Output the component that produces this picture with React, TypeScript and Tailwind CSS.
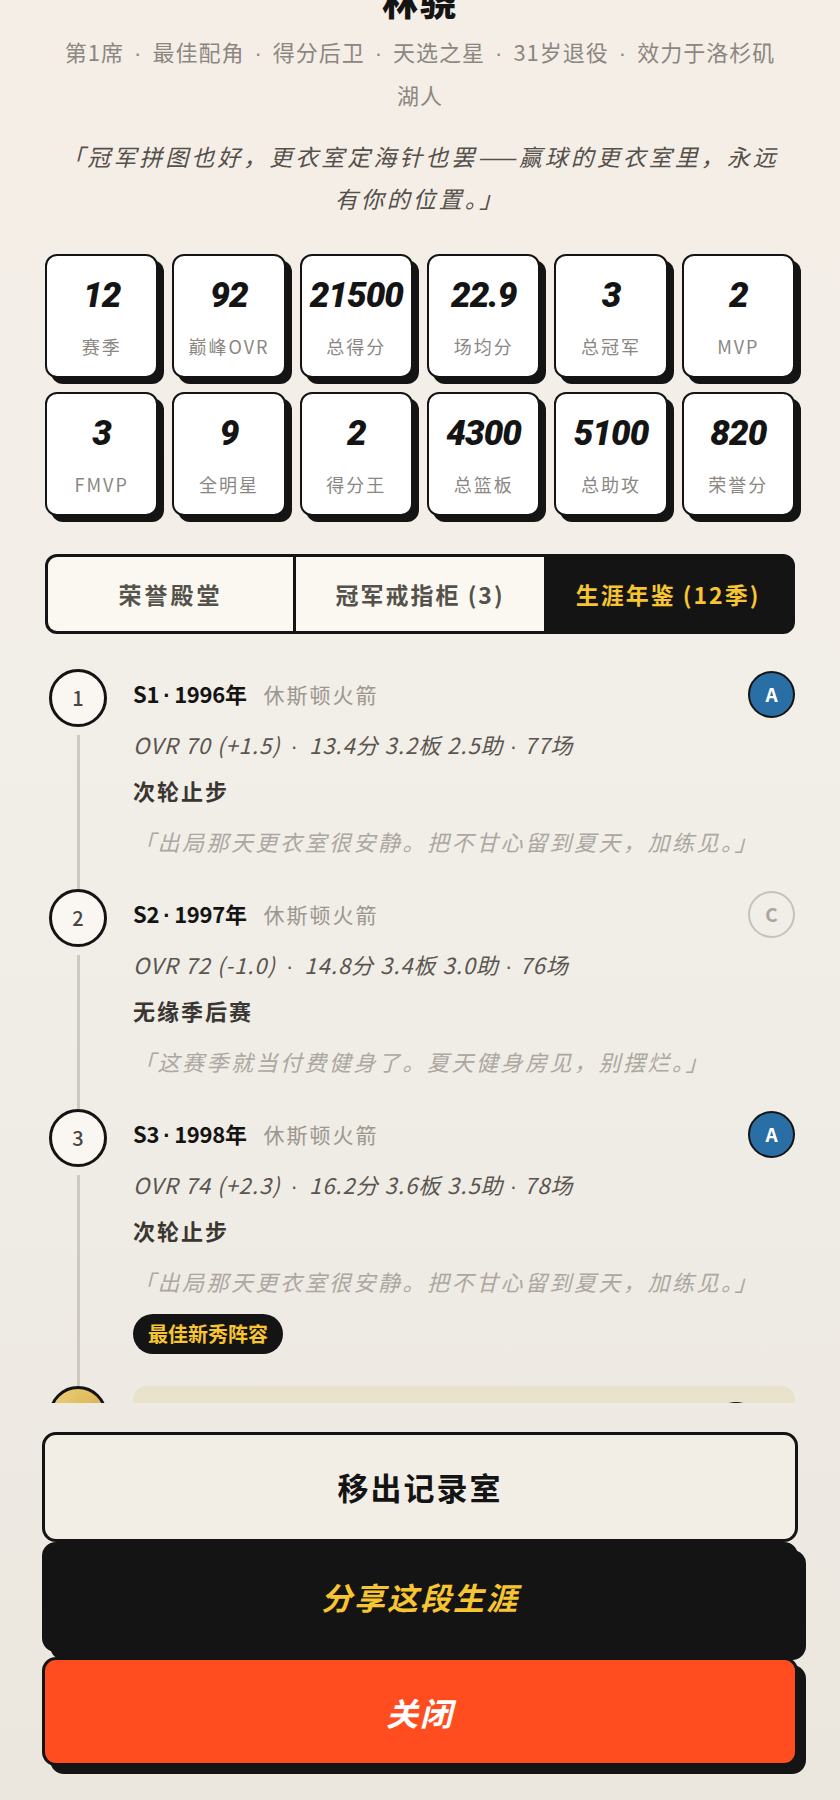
import React from 'react';

const stats: [string, string][] = [
  ['12', '赛季'],
  ['92', '巅峰OVR'],
  ['21500', '总得分'],
  ['22.9', '场均分'],
  ['3', '总冠军'],
  ['2', 'MVP'],
  ['3', 'FMVP'],
  ['9', '全明星'],
  ['2', '得分王'],
  ['4300', '总篮板'],
  ['5100', '总助攻'],
  ['820', '荣誉分'],
];

interface Season {
  no: number;
  year: string;
  team: string;
  grade: 'A' | 'C';
  ovr: string;
  line: string;
  games: string;
  result: string;
  quote: string;
  honor?: string;
}

const seasons: Season[] = [
  {
    no: 1,
    year: '1996年',
    team: '休斯顿火箭',
    grade: 'A',
    ovr: 'OVR 70 (+1.5)',
    line: '13.4分 3.2板 2.5助',
    games: '77场',
    result: '次轮止步',
    quote: '「出局那天更衣室很安静。把不甘心留到夏天，加练见。」',
  },
  {
    no: 2,
    year: '1997年',
    team: '休斯顿火箭',
    grade: 'C',
    ovr: 'OVR 72 (-1.0)',
    line: '14.8分 3.4板 3.0助',
    games: '76场',
    result: '无缘季后赛',
    quote: '「这赛季就当付费健身了。夏天健身房见，别摆烂。」',
  },
  {
    no: 3,
    year: '1998年',
    team: '休斯顿火箭',
    grade: 'A',
    ovr: 'OVR 74 (+2.3)',
    line: '16.2分 3.6板 3.5助',
    games: '78场',
    result: '次轮止步',
    quote: '「出局那天更衣室很安静。把不甘心留到夏天，加练见。」',
    honor: '最佳新秀阵容',
  },
];

// narrow latin middle dot, CJK font draws it too wide
const Dot: React.FC<{ cls?: string }> = ({ cls = 'mx-[10px]' }) => (
  <span className={`font-['Liberation_Sans',sans-serif] not-italic ${cls}`}>·</span>
);

const GradeBadge: React.FC<{ grade: Season['grade'] }> = ({ grade }) =>
  grade === 'C' ? (
    <div className="w-[47px] h-[47px] rounded-full border-2 border-[#c6c1ba] flex items-center justify-center text-[19px] font-bold text-[#aaa59e]">
      C
    </div>
  ) : (
    <div className="w-[47px] h-[47px] rounded-full border-2 border-[#141414] bg-[#2a6ea6] flex items-center justify-center text-[19px] font-bold text-white">
      A
    </div>
  );

const SeasonRow: React.FC<{ s: Season }> = ({ s }) => (
  <div className="flex">
    <div className="w-[58px] flex flex-col items-center shrink-0">
      <div className="w-[58px] h-[58px] rounded-full border-[3px] border-[#141414] bg-[#faf7f2] flex items-center justify-center text-[20px] font-medium text-[#4a4642]">
        {s.no}
      </div>
      <div className="mt-[8px] w-[3px] flex-1 bg-[#cdc9c2]" />
    </div>
    <div className="ml-[26px] flex-1 pb-[32px]">
      <div className="h-[50px] flex items-center justify-between">
        <div className="flex items-baseline">
          <span className="text-[22px] font-bold text-[#141414] tracking-[-0.3px]">
            S{s.no}
            <Dot cls="mx-[4px]" />
            {s.year}
          </span>
          <span className="ml-[17px] text-[21px] text-[#9c978f] tracking-[2px]">{s.team}</span>
        </div>
        <GradeBadge grade={s.grade} />
      </div>
      <div className="mt-[10px] leading-[30px] text-[22px] italic text-[#5a5550] tracking-[1px]">
        {s.ovr}
        <Dot />
        {s.line}
        <Dot cls="mx-[6px]" />
        {s.games}
      </div>
      <div className="mt-[12px] leading-[32px] text-[22px] font-bold text-[#3a3632] tracking-[2px]">{s.result}</div>
      <div className="mt-[19px] leading-[32px] text-[22px] italic text-[#aca7a0] tracking-[2.5px]">{s.quote}</div>
      {s.honor && (
        <div className="mt-[17px] inline-flex h-[40px] items-center rounded-full bg-[#141414] px-[15px] text-[20px] font-bold text-[#f7c531]">
          {s.honor}
        </div>
      )}
    </div>
  </div>
);

// 4th season is cut by the sheet edge: only the top of its gold card shows
const GoldRowPeek: React.FC = () => (
  <div className="flex">
    <div className="w-[58px] shrink-0">
      <div className="w-[58px] h-[58px] rounded-full border-[3px] border-[#141414] bg-gradient-to-br from-[#efd27a] to-[#c9a13b]" />
    </div>
    <div className="ml-[26px] flex-1 h-[120px] rounded-[14px] bg-gradient-to-b from-[#e8e1cb] to-[#efe9d8] pt-[16px] pr-[35px] flex justify-end">
      <div className="w-[48px] h-[48px] rounded-full border-2 border-[#141414] bg-[#1c1c1c]" />
    </div>
  </div>
);

export default function App() {
  return (
    <div className="w-[840px] h-[1800px] overflow-hidden flex flex-col bg-gradient-to-b from-[#f5eee7] via-[#f1eee8] to-[#ebe7df] font-['Noto_Sans_CJK_SC','Noto_Sans',sans-serif]">
      {/* scrolling sheet */}
      <div className="h-[1403px] shrink-0 overflow-hidden">
        <div className="-mt-[22px]">
          <h1 className="text-center text-[36px] leading-[44px] font-black text-[#141414] tracking-[2px]">林骁</h1>
          <p className="mt-[9px] text-center text-[22px] leading-[40px] text-[#8c8680] tracking-[1px]">
            第1席<Dot />最佳配角<Dot />得分后卫<Dot />天选之星<Dot />31岁退役<Dot />效力于洛杉矶
            <br />
            湖人
          </p>
          <p className="mt-[21px] text-center text-[23px] leading-[42px] italic text-[#55504a] tracking-[3px]">
            「冠军拼图也好，更衣室定海针也罢——赢球的更衣室里，永远
            <br />
            有你的位置。」
          </p>

          {/* stats grid */}
          <div className="mt-[35px] px-[45px]">
            <div className="grid grid-cols-6 gap-[14px]">
              {stats.map(([num, label], i) => (
                <div
                  key={i}
                  className="h-[124px] rounded-[12px] border-2 border-[#141414] bg-white shadow-[6px_6px_0_#141414] flex flex-col items-center pt-[20px]"
                >
                  <div className="leading-[40px] text-[35px] font-black italic text-[#141414] tracking-[-1px] font-['Roboto','Liberation_Sans',sans-serif]">
                    {num}
                  </div>
                  <div className="mt-[18px] leading-[24px] text-[18px] text-[#8a8782] tracking-[2px]">{label}</div>
                </div>
              ))}
            </div>

            {/* tabs */}
            <div className="mt-[38px] h-[80px] grid grid-cols-3 rounded-[12px] border-[3px] border-[#141414] bg-[#141414] overflow-hidden">
              <div className="bg-[#faf8f1] border-r-[3px] border-[#141414] flex items-center justify-center text-[23px] font-bold text-[#55524c] tracking-[3px]">
                荣誉殿堂
              </div>
              <div className="bg-[#faf8f1] flex items-center justify-center text-[23px] font-bold text-[#55524c] tracking-[2px]">
                冠军戒指柜 (3)
              </div>
              <div className="bg-[#141414] flex items-center justify-center text-[23px] font-bold text-[#f7c531] tracking-[2px]">
                生涯年鉴 (12季)
              </div>
            </div>
          </div>

          {/* timeline */}
          <div className="mt-[35px] pl-[49px] pr-[45px]">
            {seasons.map((s) => (
              <SeasonRow key={s.no} s={s} />
            ))}
            <GoldRowPeek />
          </div>
        </div>
      </div>

      {/* footer actions */}
      <div className="flex-1 px-[42px] pt-[29px]">
        <button className="w-full h-[110px] rounded-[14px] border-[3px] border-[#141414] bg-[#f2eee6] text-[31px] font-bold text-[#141414] tracking-[2px]">
          移出记录室
        </button>
        <button className="w-full h-[110px] rounded-[14px] border-[3px] border-[#141414] bg-[#141414] shadow-[8px_8px_0_#141414] text-[31px] font-bold italic text-[#f7c531] tracking-[2px]">
          分享这段生涯
        </button>
        <button className="mt-[5px] w-full h-[109px] rounded-[14px] border-[3px] border-[#141414] bg-[#ff4d1f] shadow-[8px_8px_0_#141414] text-[32px] font-bold italic text-white tracking-[2px]">
          关闭
        </button>
      </div>
    </div>
  );
}
